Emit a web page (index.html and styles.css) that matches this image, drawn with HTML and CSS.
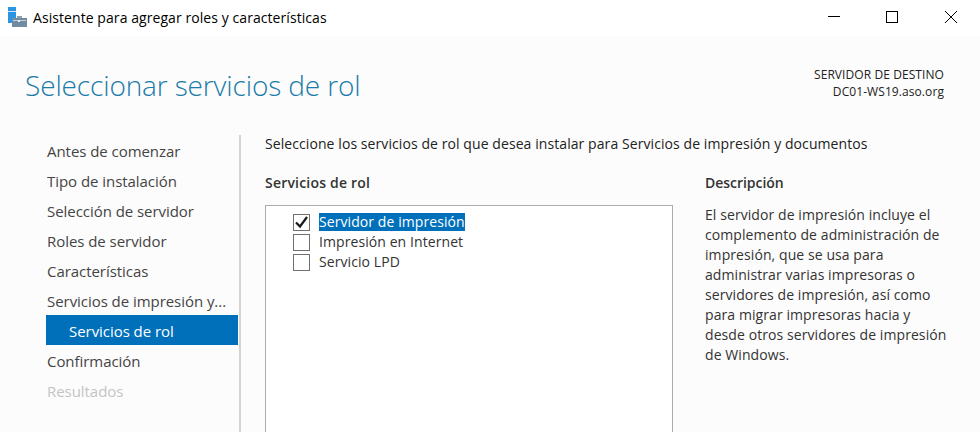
FILE: index.html
```html
<!DOCTYPE html>
<html lang="es">
<head>
<meta charset="utf-8">
<title>Asistente para agregar roles y características</title>
<link rel="stylesheet" href="styles.css">
</head>
<body>
<div class="window">
  <header class="titlebar">
    <svg class="app-icon" width="20" height="20" viewBox="0 0 20 20">
      <rect x="0" y="0" width="8" height="16" fill="#2b95e3"/>
      <rect x="0" y="4" width="8" height="1" fill="#cfe6f7"/>
      <path d="M9 9h5v2H9z" fill="#8aa3b5"/>
      <rect x="4" y="11" width="15" height="9" fill="#6f8ca3"/>
      <rect x="5" y="13" width="13" height="1" fill="#c4d3de"/>
      <rect x="10" y="13" width="2" height="2" fill="#e8eef2"/>
    </svg>
    <span class="title-text">Asistente para agregar roles y características</span>
    <div class="controls">
      <span class="ctl ctl-min"><svg width="12" height="12" viewBox="0 0 12 12"><path d="M0 5.500h12" stroke="#000" fill="none"/></svg></span>
      <span class="ctl"><svg width="12" height="12" viewBox="0 0 12 12"><rect x=".5" y=".5" width="11" height="11" stroke="#000" fill="none"/></svg></span>
      <span class="ctl ctl-close"><svg width="12" height="12" viewBox="0 0 12 12"><path d="M0 0l12 12M12 0L0 12" stroke="#000" fill="none"/></svg></span>
    </div>
  </header>
  <div class="body">
    <div class="page-head">
      <h1>Seleccionar servicios de rol</h1>
      <div class="dest">SERVIDOR DE DESTINO<br>DC01-WS19.aso.org</div>
    </div>
    <div class="main">
      <nav class="steps">
        <div class="step">Antes de comenzar</div>
        <div class="step">Tipo de instalación</div>
        <div class="step">Selección de servidor</div>
        <div class="step">Roles de servidor</div>
        <div class="step">Características</div>
        <div class="step">Servicios de impresión y...</div>
        <div class="step active">Servicios de rol</div>
        <div class="step">Confirmación</div>
        <div class="step muted">Resultados</div>
      </nav>
      <section class="content">
        <p class="intro">Seleccione los servicios de rol que desea instalar para Servicios de impresión y documentos</p>
        <div class="cols">
          <div class="roles">
            <h2>Servicios de rol</h2>
            <div class="listbox">
              <div class="item">
                <span class="box"><svg width="15" height="15" viewBox="0 0 15 15"><path d="M2 7.500l4 4 7-9.500" stroke="#1a1a1a" stroke-width="2.200" fill="none"/></svg></span>
                <span class="label selected">Servidor de impresión</span>
              </div>
              <div class="item"><span class="box"></span><span class="label">Impresión en Internet</span></div>
              <div class="item"><span class="box"></span><span class="label">Servicio LPD</span></div>
            </div>
          </div>
          <aside class="desc">
            <h2 class="desc-title">Descripción</h2>
            <p>El servidor de impresión incluye el complemento de administración de impresión, que se usa para administrar varias impresoras o servidores de impresión, así como para migrar impresoras hacia y desde otros servidores de impresión de Windows.</p>
          </aside>
        </div>
      </section>
    </div>
  </div>
</div>
</body>
</html>
```
FILE: styles.css
```css
html, body { margin: 0; padding: 0; }
body { width: 980px; height: 432px; overflow: hidden; background: #fcfcfc; font-family: "Open Sans", "Noto Sans", sans-serif; color: #333; }
.window { display: flex; flex-direction: column; height: 432px; }
.titlebar { height: 36px; flex: none; background: #fff; display: flex; align-items: center; padding-left: 8px; color: #000; }
.app-icon { margin-right: 5px; flex: none; margin-top: -2px; }
.title-text { font-size: 14px; letter-spacing: 0.07px; margin-top: -1px; }
.controls { margin-left: auto; margin-right: -2px; display: flex; align-self: flex-start; }
.ctl { width: 60px; height: 34px; display: flex; align-items: center; justify-content: center; }
.ctl-min svg { margin-left: 4px; }
.ctl-close svg { margin-right: 2px; }
.body { flex: 1; min-height: 0; display: flex; flex-direction: column; }
.page-head { height: 97px; flex: none; display: flex; justify-content: space-between; padding: 0 36px 0 25px; }
h1 { margin: 29px 0 0; font-size: 28px; font-weight: 300; line-height: 40px; color: #1a7ba8; letter-spacing: -0.13px; }
.dest { margin-top: 30px; font-size: 12px; line-height: 17px; text-align: right; color: #222; letter-spacing: 0.08px; }
.main { flex: 1; min-height: 0; display: flex; }
.steps { width: 192px; margin-left: 46px; flex: none; padding-top: 2px; }
.step { height: 30px; line-height: 32px; font-size: 15px; color: #444; letter-spacing: -0.05px; white-space: nowrap; padding-left: 1px; box-sizing: border-box; }
.step.active { background: #0070bb; color: #fff; padding-left: 23px; }
.step.muted { color: #c4c4c4; }
.content { margin: 2px 0 0 1px; flex: 1; border-left: 2px solid #d4d4d4; padding-left: 24px; }
.intro { margin: 0; font-size: 14px; line-height: 18px; color: #222; letter-spacing: 0.08px; }
.cols { display: flex; margin-top: 20px; }
.roles { width: 408px; flex: none; }
h2 { margin: 0; font-size: 14px; font-weight: 600; line-height: 20px; color: #333; letter-spacing: 0.2px; }
.desc-title { letter-spacing: -0.03px; }
.listbox { margin-top: 12px; height: 240px; border: 1px solid #acacac; background: #fff; padding: 6px 0 0 27px; box-sizing: border-box; }
.item { display: flex; align-items: center; height: 20px; }
.box { width: 15px; height: 15px; border: 1px solid #707070; background: #fff; margin-right: 9px; flex: none; display: flex; }
.label { font-size: 14px; line-height: 18px; color: #333; letter-spacing: 0.08px; }
.label.selected { background: #0070bb; color: #fff; }
.desc { margin-left: 32px; width: 245px; }
.desc p { margin: 12px 0 0; font-size: 14px; line-height: 20px; color: #333; letter-spacing: 0.08px; }
```
